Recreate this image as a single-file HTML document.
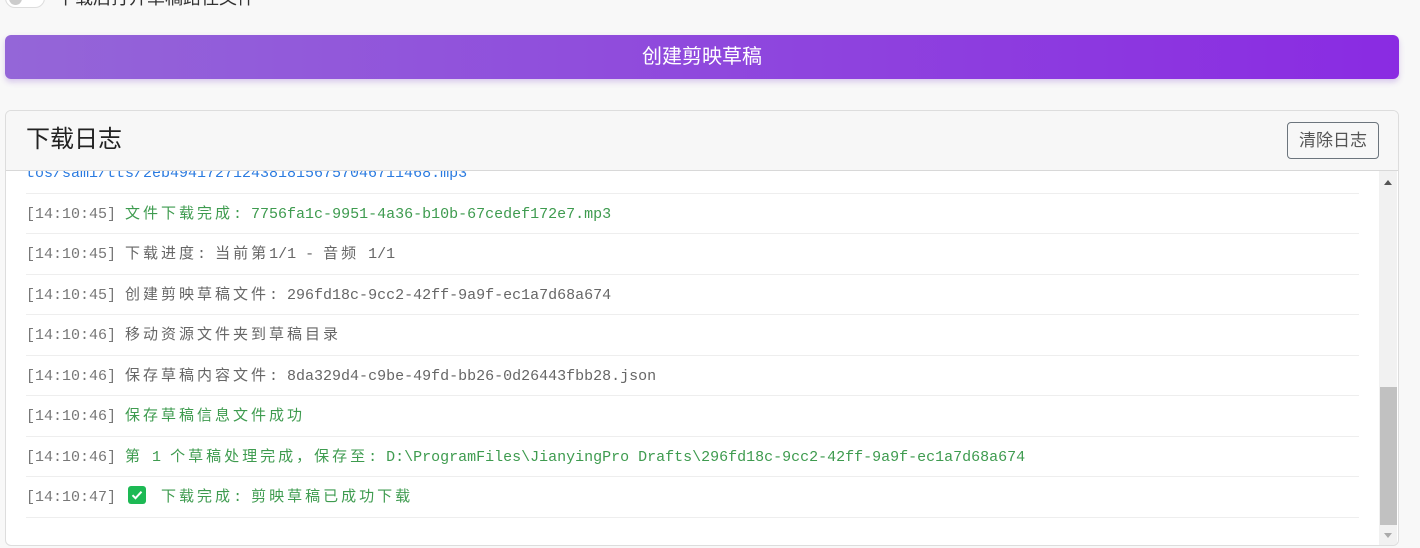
<!DOCTYPE html>
<html><head><meta charset="utf-8"><style>
*{box-sizing:border-box;margin:0;padding:0}
body{width:1420px;height:548px;background:#f8f8f8;font-family:"Liberation Sans","Noto Sans CJK SC",sans-serif;position:relative;overflow:hidden}
.tog{position:absolute;left:5px;top:-12px;width:40px;height:20px;border-radius:10px;background:#fff;border:1px solid #ddd}
.tog i{position:absolute;left:3px;top:3px;width:13px;height:13px;border-radius:50%;background:#ccc}
.tl{position:absolute;left:57px;top:-14px;font-size:18px;color:#333;line-height:24px}
.btn{position:absolute;left:5px;top:35px;width:1394px;height:44px;border-radius:6px;background:linear-gradient(90deg,#9466d8,#8a2be2);color:#fff;font-size:20px;text-align:center;line-height:44px;box-shadow:0 3px 6px rgba(120,60,200,.25)}
.card{position:absolute;left:5px;top:110px;width:1394px;height:436px;border:1px solid #ddd;border-radius:6px;background:#fff;overflow:hidden}
.hd{height:60px;background:#f7f7f7;border-bottom:1px solid #d8d8d8;position:relative}
.hd h2{position:absolute;left:20px;top:13px;font-size:24px;font-weight:normal;color:#222;line-height:32px}
.clr{position:absolute;left:1281px;top:11px;width:92px;height:37px;border:1px solid #6c757d;border-radius:4px;font-size:17px;color:#555;text-align:center;line-height:35px}
.log{position:absolute;left:0;top:60px;width:1373px;height:376px;overflow:hidden}
.rows{position:absolute;left:20px;top:-18px;width:1333px}
.r{height:40.5px;border-bottom:1px solid #eee;font-family:"Liberation Mono","Noto Sans CJK SC",monospace;font-size:15px;line-height:42px;white-space:pre;color:#666}
.c{letter-spacing:3px}
.g{color:#3e9b4f}.b{color:#2b7be0}
.t{color:#777}
.sb{position:absolute;left:1373px;top:60px;width:18px;height:376px;background:#f1f1f1}
.th{position:absolute;left:1px;top:216px;width:17px;height:138px;background:#c1c1c1}
.ck{display:inline-block;width:18px;height:18px;background:#1db954;border-radius:3px;vertical-align:-3px;position:relative;margin-left:3px;margin-right:-3px}
</style></head><body>
<div class="tog"><i></i></div>
<div class="tl">下载后打开草稿路径文件</div>
<div class="btn">创建剪映草稿</div>
<div class="card">
<div class="hd"><h2>下载日志</h2><div class="clr">清除日志</div></div>
<div class="log"><div class="rows">
<div class="r b">tos/sami/tts/2eb49417271243818156757046711468.mp3</div>
<div class="r"><span class="t">[14:10:45] </span><span class="g"><span class="c">文件下载完成</span>: 7756fa1c-9951-4a36-b10b-67cedef172e7.mp3</span></div>
<div class="r"><span class="t">[14:10:45] </span><span class="c">下载进度</span>: <span class="c">当前第</span>1/1 - <span class="c">音频</span> 1/1</div>
<div class="r"><span class="t">[14:10:45] </span><span class="c">创建剪映草稿文件</span>: 296fd18c-9cc2-42ff-9a9f-ec1a7d68a674</div>
<div class="r"><span class="t">[14:10:46] </span><span class="c">移动资源文件夹到草稿目录</span></div>
<div class="r"><span class="t">[14:10:46] </span><span class="c">保存草稿内容文件</span>: 8da329d4-c9be-49fd-bb26-0d26443fbb28.json</div>
<div class="r g"><span class="t">[14:10:46] </span><span class="c">保存草稿信息文件成功</span></div>
<div class="r g"><span class="t">[14:10:46] </span><span class="c">第</span> 1 <span class="c">个草稿处理完成，保存至</span>: D:\ProgramFiles\JianyingPro Drafts\296fd18c-9cc2-42ff-9a9f-ec1a7d68a674</div>
<div class="r g"><span class="t">[14:10:47] </span><span class="ck"><svg width="18" height="18" viewBox="0 0 18 18" style="position:absolute;left:0;top:0"><path d="M4.5 9.2l3 3 6-6.5" fill="none" stroke="#fff" stroke-width="2"/></svg></span>  <span class="c">下载完成</span>: <span class="c">剪映草稿已成功下载</span></div>
</div></div>
<div class="sb"><svg width="18" height="376" style="position:absolute;left:0;top:0"><path d="M5 14l4-5 4 5z" fill="#555"/><path d="M5 362l4 5 4-5z" fill="#aaa"/></svg><div class="th"></div></div>
</div>
</body></html>
